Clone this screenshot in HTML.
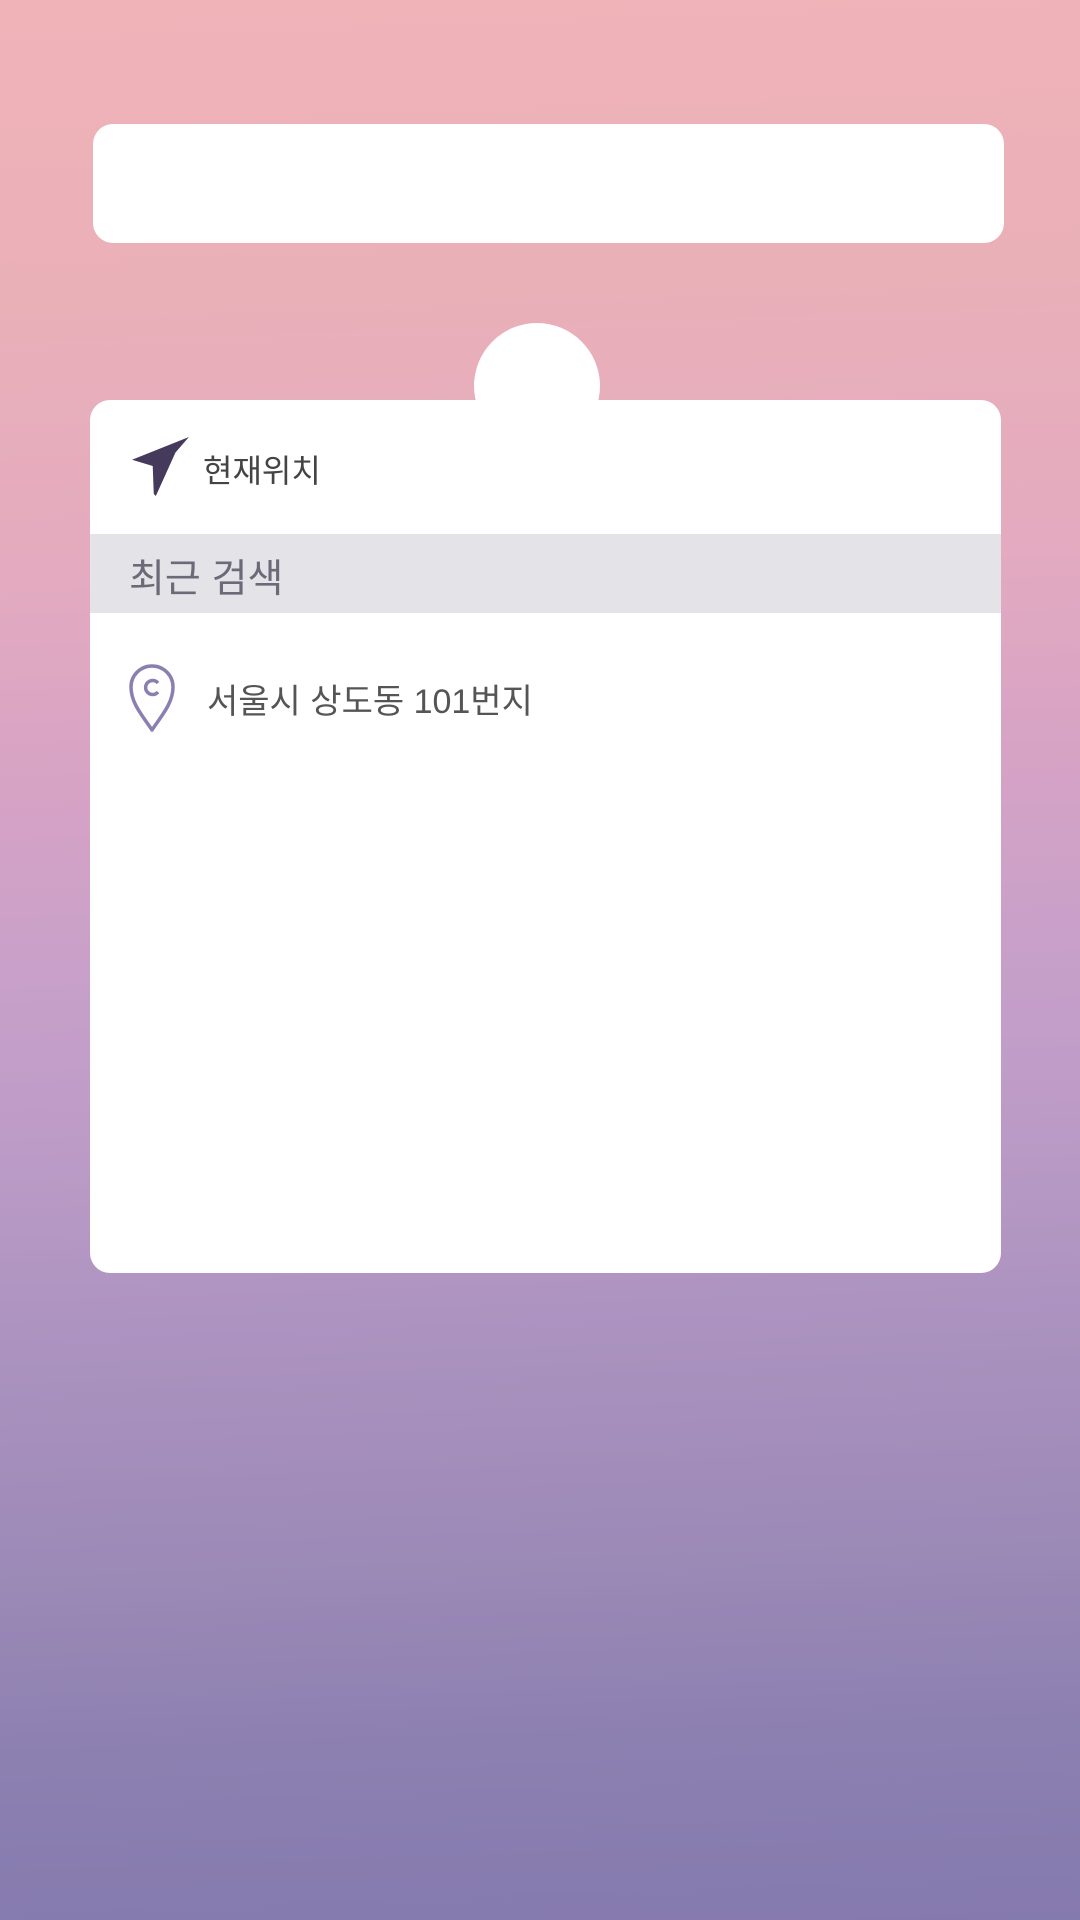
<!DOCTYPE html>
<html><head><meta charset="utf-8"><style>
html,body{margin:0;padding:0}
body{width:1080px;height:1920px;position:relative;overflow:hidden;
background:linear-gradient(178deg,#f0b3b8 0%,#eab0b8 15%,#e3aac0 30%,#d7a3c5 40%,#c8a0c9 50%,#bd9cc7 58%,#ad93c0 68%,#9d8ab7 80%,#8c80b1 90%,#857aae 100%);
font-family:"Liberation Sans","Noto Sans CJK KR",sans-serif}
.box{position:absolute;background:#fff;border-radius:20px}
</style></head><body>
<div class="box" style="left:93px;top:124px;width:911px;height:119px"></div>
<div style="position:absolute;left:474px;top:323px;width:126px;height:126px;border-radius:50%;background:#fff"></div>
<div class="box" style="left:90px;top:400px;width:911px;height:873px;overflow:hidden">
  <svg style="position:absolute;left:41px;top:37px" width="60" height="60" viewBox="0 0 56 58">
    <path d="M0 22 L55 0 L42 15 L23 57 L21 55 L20 28 Z" fill="#453a5c"/>
  </svg>
  <div style="position:absolute;left:113px;top:51px;font-size:32px;color:#444;line-height:40px">현재위치</div>
  <div style="position:absolute;left:0;top:134px;width:911px;height:79px;background:#e4e3e8"></div>
  <div style="position:absolute;left:39px;top:157px;font-size:39px;color:#6c6a78;line-height:46px">최근 검색</div>
  <svg style="position:absolute;left:37px;top:263px" width="50" height="70" viewBox="0 0 48 70">
    <path d="M24 67 C14 52 3 40 3 24 A21 21 0 0 1 45 24 C45 40 34 52 24 67 Z" fill="none" stroke="#8a7fb0" stroke-width="3.5" stroke-linejoin="round"/>
    <path d="M30 20 A7 7 0 1 0 30 29" fill="none" stroke="#8a7fb0" stroke-width="3.5"/>
  </svg>
  <div style="position:absolute;left:117px;top:280px;font-size:34px;color:#555;line-height:44px">서울시 상도동 101번지</div>
</div>
</body></html>
